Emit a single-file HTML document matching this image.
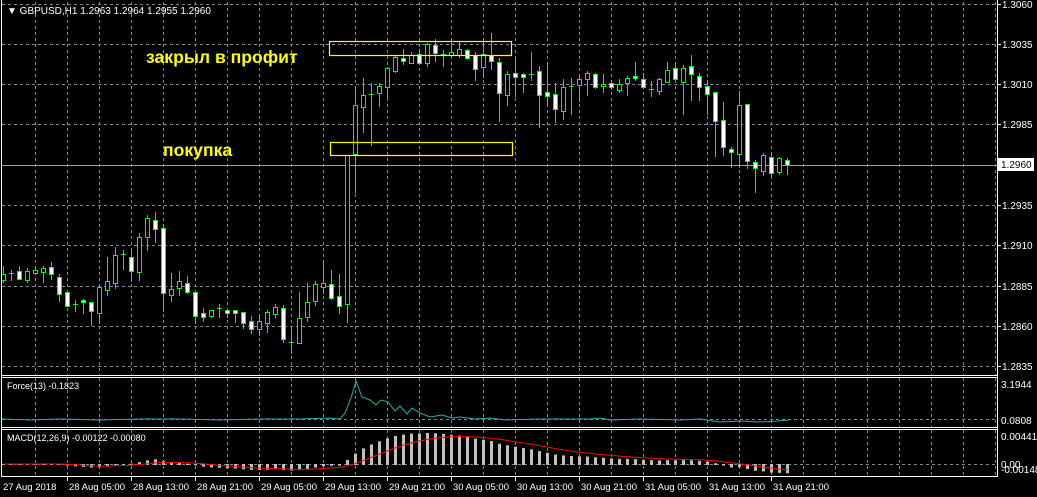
<!DOCTYPE html>
<html><head><meta charset="utf-8"><style>
html,body{margin:0;padding:0;background:#000;width:1037px;height:497px;overflow:hidden}
svg{display:block}
text{font-family:"Liberation Sans","DejaVu Sans",sans-serif;font-size:10px;fill:#fff}
</style></head><body>
<svg id="s" width="1037" height="497" xmlns="http://www.w3.org/2000/svg">
<rect width="1037" height="497" fill="#000"/>
<g id="grid" stroke="#778899" stroke-dasharray="3,3" stroke-width="1"></g>
<line x1="2" y1="165.5" x2="997" y2="165.5" stroke="#a0a0a0"/>
<g id="force"></g>
<g id="macd"></g>
<g id="c"></g>
<rect x="329.5" y="41.5" width="182" height="14" style="fill:none;stroke:#ffff00;stroke-width:1.2"/>
<rect x="330.5" y="142.5" width="182" height="13" style="fill:none;stroke:#ffff00;stroke-width:1.2"/>
<text x="146" y="63" style="font-size:17.6px;font-weight:bold;fill:#ffff00">закрыл в профит</text>
<text x="163" y="156" style="font-size:17.6px;font-weight:bold;fill:#ffff00">покупка</text>
<g fill="none" stroke="#fff">
<line x1="1.5" y1="0" x2="1.5" y2="477"/>
<line x1="997.5" y1="0" x2="997.5" y2="477"/>
<line x1="1" y1="375.5" x2="998" y2="375.5"/>
<line x1="1" y1="377.5" x2="998" y2="377.5"/>
<line x1="1" y1="427.5" x2="998" y2="427.5"/>
<line x1="1" y1="429.5" x2="998" y2="429.5"/>
<line x1="1" y1="476.5" x2="998" y2="476.5"/>
</g>
<text x="7" y="14">▼ GBPUSD,H1  1.2963 1.2964 1.2955 1.2960</text>
<text x="7" y="389" style="font-size:9px">Force(13) -0.1823</text>
<text x="7" y="441" style="font-size:9px">MACD(12,26,9) -0.00122 -0.00080</text>
<g id="ax"></g>
<rect x="998" y="158" width="36" height="13" fill="#fff"/>
<text x="1001" y="168" style="fill:#000">1.2960</text>
<text x="1001" y="388">3.1944</text>
<text x="1001" y="424">0.0808</text>
<text x="1001" y="440">0.00441</text>
<text x="1001" y="468">0.00</text>
<text x="1001" y="473">-0.00148</text>
</svg>
<script>
var NS="http://www.w3.org/2000/svg";
function el(p,t,a){var e=document.createElementNS(NS,t);for(var k in a)e.setAttribute(k,a[k]);p.appendChild(e);return e;}
var g=document.getElementById('grid');
for(var x=35;x<997;x+=32){el(g,'line',{x1:x+.5,y1:2,x2:x+.5,y2:375});el(g,'line',{x1:x+.5,y1:378,x2:x+.5,y2:427});el(g,'line',{x1:x+.5,y1:430,x2:x+.5,y2:476});}
var hy=[4,44,84,124,205,245,286,326,366];
hy.forEach(function(y){el(g,'line',{x1:2,y1:y+.5,x2:997,y2:y+.5});});
el(g,'line',{x1:2,y1:419.5,x2:997,y2:419.5});
el(g,'line',{x1:2,y1:464.5,x2:997,y2:464.5});
var ax=document.getElementById('ax');
var pl=['1.3060','1.3035','1.3010','1.2985','','1.2935','1.2910','1.2885','1.2860','1.2835'];
var py=[4,44,84,124,165,205,245,286,326,366];
pl.forEach(function(l,i){el(ax,'line',{x1:997,y1:py[i]+.5,x2:1001,y2:py[i]+.5,stroke:'#fff'});if(l){var t=el(ax,'text',{x:1002,y:py[i]+4});t.textContent=l;}});
var tl=['27 Aug 2018','28 Aug 05:00','28 Aug 13:00','28 Aug 21:00','29 Aug 05:00','29 Aug 13:00','29 Aug 21:00','30 Aug 05:00','30 Aug 13:00','30 Aug 21:00','31 Aug 05:00','31 Aug 13:00','31 Aug 21:00'];
tl.forEach(function(l,i){var x=3+64*i;if(i>0)el(ax,'line',{x1:x+.5,y1:477,x2:x+.5,y2:481,stroke:'#fff'});var t=el(ax,'text',{x:i==0?3:x+2,y:490,style:'font-size:9.5px'});t.textContent=l;});
var D="274,280,266,282,u;273,273,270,280,x;271,279,266,279,d;271,280,268,282,u;270,273,266,274,u;268,272,266,282,u;267,274,262,279,d;277,294,274,301,d;292,306,292,306,d;304,304,300,311,x;300,302,299,313,d;302,311,302,325,d;287,313,287,323,u;281,290,257,295,u;255,283,247,288,u;254,254,250,269,x;257,271,248,281,d;237,272,233,280,u;218,237,215,250,u;220,229,212,242,d;228,293,224,311,d;289,295,273,301,u;281,288,271,295,u;283,292,276,293,d;292,316,292,323,d;313,317,308,321,d;310,316,310,317,u;308,308,304,317,x;310,313,310,317,d;310,313,310,322,d;312,323,312,328,d;321,329,316,333,d;321,329,314,335,u;312,323,310,332,u;307,314,304,317,u;308,339,305,342,d;342,342,327,353,x;318,343,292,343,u;302,317,283,321,u;284,301,281,305,u;283,287,260,293,u;284,298,270,299,d;296,306,274,313,d;155,304,155,322,u;105,154,87,192,u;95,107,78,132,u;94,94,83,145,x;86,93,83,106,u;68,87,67,98,u;57,71,56,72,u;58,61,49,64,d;55,63,52,63,u;54,63,49,63,d;44,63,43,66,u;45,53,39,61,d;54,54,50,66,x;52,55,39,57,u;49,55,42,57,u;50,58,49,59,d;55,69,52,80,d;54,67,38,77,u;55,61,33,69,d;62,93,58,121,d;74,95,71,105,u;73,77,57,96,d;74,77,73,92,d;74,74,52,80,x;71,95,66,127,d;92,96,62,103,d;94,109,83,122,d;87,111,79,119,u;86,86,78,114,x;79,85,74,101,u;73,79,71,95,u;74,87,73,88,d;84,86,74,92,u;83,87,80,89,d;84,90,79,92,u;78,83,76,95,u;76,78,62,80,d;79,87,73,88,d;89,89,81,96,x;79,91,78,94,u;70,82,62,82,u;68,79,62,79,d;68,82,65,114,u;66,74,55,100,d;76,87,73,100,d;86,94,83,114,d;92,121,92,156,d;120,147,102,155,d;149,152,147,167,d;105,154,91,167,u;104,161,104,168,d;162,168,160,192,d;155,171,153,175,u;157,173,153,175,d;158,172,157,174,u;160,165,158,174,d";
var c=document.getElementById('c');var closes=[];
D.split(';').forEach(function(s,i){var a=s.split(',');var t=+a[0],b=+a[1],h=+a[2],l=+a[3],k=a[4];var x=3+8*i+.5;
el(c,'line',{x1:x,y1:h,x2:x,y2:l+1,stroke:'#00ff00'});
if(k=='x'){el(c,'line',{x1:x-2.5,y1:t+.5,x2:x+2.5,y2:t+.5,stroke:'#00ff00'});closes.push(t);}
else{el(c,'rect',{x:x-2,y:t+.5,width:4,height:Math.max(b-t,1),fill:k=='d'?'#fff':'#000',stroke:'#00ff00'});closes.push(k=='u'?t:b);}
});
var p=closes.map(function(y){return -y;});
function ema(a,n){var k=2/(n+1),r=[],e=a[0];a.forEach(function(v){e=v*k+e*(1-k);r.push(e);});return r;}
var e12=ema(p,12),e26=ema(p,26);var m=p.map(function(v,i){return e12[i]-e26[i];});
var sg=[],s=m[0];m.forEach(function(v){s=s+(v-s)*0.2;sg.push(s);});
var mx=Math.max.apply(null,m);var sc=31/mx;
var mg=document.getElementById('macd');var pts=[];
m.forEach(function(v,i){var x=3+8*i;var y=464-v*sc;var y0=Math.min(y,464),y1=Math.max(y,465);el(mg,'rect',{x:x-1,y:y0,width:3,height:Math.max(y1-y0,1),fill:'#c0c0c0'});pts.push((x+.5)+','+(464-sg[i]*sc).toFixed(1));});
el(mg,'polyline',{points:pts.join(' '),fill:'none',stroke:'#ff0000'});
var fp="2,419 30,420 60,419 100,420 140,419 180,419 220,420 260,419 300,419 330,418 340,419 345,413 351,398 356,381 362,397 370,400 376,405 381,400 388,402 395,411 400,406 407,414 412,408 420,413 430,417 442,415 452,418 460,417 475,419 490,418 505,420 540,419 590,419 600,418 610,420 640,419 680,420 700,419 720,422 740,421 760,422 778,421 789,420";
el(document.getElementById('force'),'polyline',{points:fp,fill:'none',stroke:'#20b2aa'});
</script>
</body></html>
